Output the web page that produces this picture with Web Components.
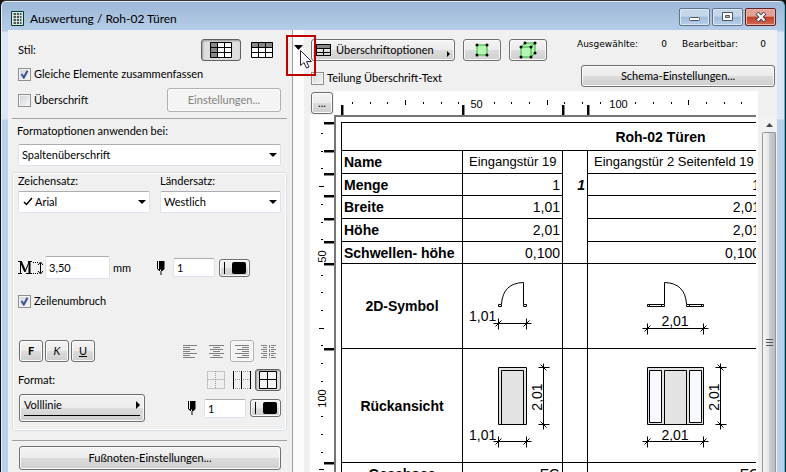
<!DOCTYPE html>
<html lang="de">
<head>
<meta charset="utf-8">
<title>Auswertung / Roh-02 Türen</title>
<style>
html, body { height: 100%; margin: 0; }
body { background: #111; overflow: hidden; font: 11px/14px Lato, "DejaVu Sans Condensed", sans-serif; color: #000; }
</style>
</head>
<body>
<report-window></report-window>
<script>
const base = `
*, *::before, *::after { box-sizing: border-box; }
svg { display: block; flex: none; }
button, input, select { font: inherit; color: inherit; margin: 0; }
`;
function define(name, css, html, setup) {
  const t = document.createElement('template');
  t.innerHTML = `<style>${base}${css}</style>${html}`;
  customElements.define(name, class extends HTMLElement {
    constructor() { super(); this.attachShadow({ mode: 'open' }).append(t.content.cloneNode(true)); }
    connectedCallback() { if (setup) setup(this, this.shadowRoot); }
  });
}

/* push button */
define('ui-button', `
:host { display: block; height: 22px; }
button { width: 100%; height: 100%; display: flex; align-items: center; justify-content: center; gap: 5px; padding: 0 4px;
  border: 1px solid #707070; border-radius: 3px; box-shadow: inset 0 0 0 1px #fafafa;
  background: linear-gradient(#f3f3f3 0%, #ebebeb 50%, #dcdcdc 51%, #cecece 100%); }
:host([kind=pressed]) button { background: #dedede; border-color: #606060; box-shadow: inset 1px 1px 2px #999; }
:host([kind=flat]) button { background: none; border-color: transparent; box-shadow: none; }
:host([kind=framed]) button { background: #f4f4f4; border-color: #adb2b5; }
:host([kind=disabled]) button { background: #f4f4f4; border-color: #adb2b5; color: #838383; }
:host([align=left]) button { justify-content: flex-start; }
:host([kind=dark]) button { padding: 0 2px; }
`, `<button type="button"><slot></slot></button>`, (h, r) => {
  const b = r.querySelector('button');
  if (h.getAttribute('kind') === 'disabled') b.disabled = true;
  if (h.getAttribute('name')) b.setAttribute('aria-label', h.getAttribute('name'));
});

/* check box with its label */
define('ui-check', `
:host { display: block; }
label { display: flex; align-items: center; gap: 3px; height: 14px; white-space: nowrap; }
input { appearance: none; width: 13px; height: 13px; border: 1px solid #8e8f8f; background: linear-gradient(135deg, #cfd3d8, #f6f6f6); box-shadow: inset 0 0 0 1px #f4f4f4; }
input:checked { background: url("data:image/svg+xml,%3Csvg xmlns='http://www.w3.org/2000/svg' viewBox='0 0 11 11'%3E%3Cpath d='M2.5 5L4.8 8.5L8.5 1.8' fill='none' stroke='%233c5397' stroke-width='2'/%3E%3C/svg%3E") center/11px no-repeat, linear-gradient(135deg, #cfd3d8, #f6f6f6); }
`, `<label><input type="checkbox"><slot></slot></label>`, (h, r) => { r.querySelector('input').checked = h.hasAttribute('checked'); });

/* drop-down with optional caption and check mark */
define('ui-select', `
:host { display: block; }
label { display: block; height: 14px; margin-bottom: 3px; }
:host([plain]) label { margin: 0 0 6px -1px; }
.box { position: relative; }
select { appearance: none; width: 100%; height: 22px; border: 1px solid #dce3ec; border-top-color: #abadb3; border-radius: 2px; background: #fff; padding: 0 20px 0 3px; outline: 0; }
:host([mark]) select { padding-left: 16px; }
.arrow { position: absolute; right: 4px; top: 9px; }
.mark { position: absolute; left: 5px; top: 6px; display: none; }
:host([mark]) .mark { display: block; }
`, `<label for="s"></label><div class="box"><select id="s"></select>
<svg class="mark" width="10" height="9"><path d="M1 5L3.500 7.500L9 1" fill="none" stroke="#000" stroke-width="1.5"/></svg>
<svg class="arrow" width="8" height="4"><path d="M0 0H8L4 4Z"/></svg></div>`, (h, r) => {
  r.querySelector('label').textContent = h.getAttribute('label');
  r.querySelector('select').append(new Option(h.getAttribute('value')));
});

/* icon, number box, unit */
define('ui-field', `
:host { display: block; }
label { display: flex; align-items: center; gap: 3px; }
input { width: var(--w, 42px); height: var(--h, 19px); border: 1px solid #dce3ec; border-top-color: #abadb3; border-radius: 2px; background: #fff; padding: 0 3px; outline: 0; }
`, `<label><slot name="icon"></slot><input type="text"><slot></slot></label>`, (h, r) => {
  const i = r.querySelector('input'); i.value = h.getAttribute('value'); i.setAttribute('aria-label', h.getAttribute('name'));
});

/* pen number with colour swatch */
define('pen-picker', `
:host { display: flex; align-items: center; gap: 4px; }
ui-field svg { margin-right: 5px; }
ui-button { width: 31px; height: 18px; }
`, `<ui-field name="Stift" value="1"><svg slot="icon" width="8" height="14"><path d="M0 0H1V8H0ZM2 0H7.500V8L5.500 10H4.500V14H3.500V10H2.500L.5 8.500V8H2Z"/><path d="M3.500 8.500V10" stroke="#fff"/></svg></ui-field>
<ui-button kind="dark" name="Stiftfarbe"><svg width="24" height="14"><path d="M1.500 1V13" stroke="#000"/><rect x="9" y="1" width="14" height="12" rx="2"/></svg></ui-button>`);

/* left settings panel */
const lines = (rows) => rows.map((w, i) => `M${w[0]} ${i * 2 + .5}H${w[1]}`).join('');
define('settings-panel', `
:host { display: block; background: #f0f0f0; padding: 9px 5px 0 4px; border-right: 1px solid #a0a0a0; }
.in { padding: 0 6px; }
.row { display: flex; align-items: center; justify-content: space-between; }
.set { display: flex; align-items: center; }
hr { border: 0; border-top: 1px solid #a0a0a0; margin: 0; }
fieldset { margin: 6px 0 9px; padding: 1px 5px 8px; border: 1px solid #d5dfe5; border-radius: 3px; box-shadow: inset 0 0 0 1px #fff; min-width: 0; }
.line { width: 100%; border-bottom: 1px solid #000; padding-bottom: 3px; margin-bottom: 2px; }
`, `
<div class="in">
  <div class="row"><span>Stil:</span>
    <div class="set" style="gap:2px">
      <ui-button kind="pressed" name="Spalten" style="width:40px"><svg width="22" height="16"><path fill="#fff" d="M0 0H22V16H0Z"/><path fill="#888" d="M0 0H8V16H0Z"/><path d="M.5 .5H21.500V15.500H.5ZM.5 5.500H21.500M.5 10.500H21.500M7.500 0V16M14.500 0V16" fill="none" stroke="#000"/></svg></ui-button>
      <ui-button kind="flat" name="Zeilen" style="width:38px"><svg width="22" height="16"><path fill="#fff" d="M0 0H22V16H0Z"/><path fill="#888" d="M0 0H22V6H0Z"/><path d="M.5 .5H21.500V15.500H.5ZM.5 5.500H21.500M.5 10.500H21.500M7.500 0V16M14.500 0V16" fill="none" stroke="#000"/></svg></ui-button>
    </div>
  </div>
  <ui-check checked style="margin-top:6px">Gleiche Elemente zusammenfassen</ui-check>
  <div class="row" style="margin-top:7px"><ui-check>Überschrift</ui-check><ui-button kind="disabled" style="width:114px;height:24px">Einstellungen...</ui-button></div>
</div>
<hr style="margin:6px 0 5px">
<div class="in"><ui-select plain label="Formatoptionen anwenden bei:" value="Spaltenüberschrift"></ui-select></div>
<fieldset>
  <div class="row"><ui-select mark label="Zeichensatz:" value="Arial" style="width:132px"></ui-select><ui-select label="Ländersatz:" value="Westlich" style="width:121px"></ui-select></div>
  <div class="row" style="margin-top:43px">
    <ui-field name="Schrifthöhe" value="3,50" style="--w:65px;--h:23px"><svg slot="icon" width="25" height="14" style="margin-right:-1px"><path d="M0 .5H4M10 .5H14M0 12.500H4M8 12.500H14" stroke="#000"/><path d="M2.500 1V12M3 1L7 11L11 1" fill="none" stroke="#000"/><path d="M3 1L7 10" stroke="#000" stroke-width="2"/><path d="M11.500 1V12" stroke="#000" stroke-width="2"/><path d="M15 1.500H20M15 12.500H20" stroke="#000" stroke-dasharray="1 1"/><path d="M22.500 2V12M20 4L22.500 1L25 4M20 10L22.500 13L25 10" fill="none" stroke="#000"/></svg>mm</ui-field>
    <pen-picker style="margin-right:31px"></pen-picker>
  </div>
  <ui-check checked style="margin-top:15px">Zeilenumbruch</ui-check>
  <div class="row" style="margin-top:32px">
    <div class="set" style="gap:2px;margin-left:1px">
      <ui-button style="width:24px"><b>F</b></ui-button><ui-button style="width:24px"><i>K</i></ui-button><ui-button style="width:24px"><u>U</u></ui-button>
    </div>
    <div class="set" style="gap:2px">
      <ui-button kind="flat" name="Linksbündig" style="width:24px"><svg width="14" height="13"><path stroke="#808080" d="${lines([[0,14],[0,7],[0,12],[0,7],[0,14],[0,7],[0,12]])}"/></svg></ui-button>
      <ui-button kind="flat" name="Zentriert" style="width:24px"><svg width="15" height="13"><path stroke="#808080" d="${lines([[0,15],[4,11],[1,14],[4,11],[0,15],[4,11],[1,14]])}"/></svg></ui-button>
      <ui-button kind="framed" name="Rechtsbündig" style="width:24px"><svg width="14" height="13"><path stroke="#808080" d="${lines([[0,14],[7,14],[2,14],[7,14],[0,14],[7,14],[2,14]])}"/></svg></ui-button>
      <ui-button kind="flat" name="Blocksatz" style="width:25px"><svg width="15" height="13"><path stroke="#808080" d="${lines([[0,6],[2,6],[0,6],[2,6],[0,6],[2,6],[0,6]])}${lines([[10,15],[10,13],[10,15],[10,13],[10,15],[10,13],[10,15]])}"/><path stroke="#808080" stroke-dasharray="3 1" d="M8.500 0V13"/></svg></ui-button>
    </div>
  </div>
  <div class="row" style="margin-top:7px"><span>Format:</span>
    <div class="set">
      <ui-button kind="flat" name="Ohne Linien" style="width:26px"><svg width="18" height="18"><path fill="none" stroke="#999" stroke-dasharray="1 1" d="M.5 .5H17.500V17.500H.5ZM.5 8.500H18M8.500 0V18"/></svg></ui-button>
      <ui-button kind="flat" name="Senkrechte Linien" style="width:26px"><svg width="18" height="18"><path stroke="#999" stroke-dasharray="1 1" d="M0 .5H18M0 8.500H18M0 17.500H18"/><path stroke="#000" d="M.5 0V18M8.500 0V18M17.500 0V18"/></svg></ui-button>
      <ui-button kind="pressed" name="Alle Linien" style="width:26px"><svg width="18" height="18"><path fill="#f4f4f4" stroke="#000" d="M.5 .5H17.500V17.500H.5ZM.5 8.500H18M8.500 0V18"/></svg></ui-button>
    </div>
  </div>
  <div class="row" style="margin-top:3px">
    <ui-button align="left" style="width:126px;height:28px;margin-left:1px"><div class="line row">Volllinie<svg width="4" height="8"><path d="M0 0L4 4L0 8Z"/></svg></div></ui-button>
    <pen-picker></pen-picker>
  </div>
</fieldset>
<hr>
<div class="in" style="padding-top:5px"><ui-button style="height:24px;margin-left:1px">Fußnoten-Einstellungen...</ui-button></div>
`);

/* rulers: scale marks every tenth, heavy marks at the table's lines */
function ruler(vertical) {
  const P = (a, b) => vertical ? `${b} ${a}` : `${a} ${b}`;
  let s = '';
  const marks = vertical ? [122,150,173,195,218,241,263,348,462] : [341,462,562,587];
  const first = vertical ? 133 : 352;
  for (let n = 0; n < 24; n++) {
    const p = Math.round(first + n * 17.7) + .5, k = n + 1, label = k === 8 || k === 16;
    if (label) {
      const t = k === 8 ? '50' : '100';
      s += vertical ? `<text text-anchor="middle" transform="translate(326 ${p - 1}) rotate(-90)">${t}</text>` : `<text text-anchor="middle" x="${p}" y="108">${t}</text>`;
    } else {
      const tall = k % 8 === 4, c = vertical ? 321 : 102;
      s += `<path stroke="#000" d="M${P(p, tall ? c - 2 : c)}L${P(p, tall ? c + 3 : c + 2)}"/>`;
    }
  }
  for (const m of marks) s += vertical
    ? `<path d="M324 ${m}h10v2h-10z"/><path fill="#888" d="M324 ${m + 2}h10v1h-10z"/>`
    : `<path d="M${m} 105h2v10h-2z"/><path fill="#888" d="M${m + 2} 105h1v10h-1z"/>`;
  return vertical ? `<svg width="24" height="1000" viewBox="310 115 24 1000">${s}</svg>` : `<svg width="424" height="24" viewBox="334 91 424 24">${s}</svg>`;
}
const rulerCss = `:host { display: block; overflow: hidden; background: #fff; min-width: 0; min-height: 0; } svg { font: 11px "Liberation Sans", Arial, sans-serif; }`;
define('ruler-top', rulerCss, ruler(false));
define('ruler-side', rulerCss, ruler(true));

/* dimension lines */
const hdim = (a, b, y) => `<path d="M${a - 5} ${y}H${b + 5}M${a} ${y - 5}V${y + 6}M${b} ${y - 5}V${y + 6}M${a - 3} ${y + 3}L${a + 3} ${y - 3}M${b - 3} ${y + 3}L${b + 3} ${y - 3}"/>`;
const vdim = (x, a, b) => `<path d="M${x} ${a - 4}V${b + 5}M${x - 5} ${a}H${x + 6}M${x - 5} ${b}H${x + 6}M${x - 3} ${a - 3}L${x + 3} ${a + 3}M${x - 3} ${b - 3}L${x + 3} ${b + 3}"/>`;
define('schedule-table', `
:host { display: block; overflow: hidden; min-width: 0; min-height: 0; background: #fff; padding: 5px 0 0 5px; border: solid #767676; border-width: 2px 0 0 2px; font: 14px/20px "Liberation Sans", Arial, sans-serif; }
table { border-collapse: collapse; table-layout: fixed; width: 639px; }
th, td { border: 1px solid #000; padding: 0 2px; white-space: nowrap; height: 1px; }
th { text-align: left; }
td { text-align: right; }
td:nth-last-child(2):not(.d) { padding-right: 5px; }
.c { text-align: center; }
td.d { padding: 0; }
td.w { text-align: left; padding-left: 6px; font-size: 13px; }
svg { fill: none; stroke: #000; }
text { fill: #000; stroke: none; }
`, `
<table>
<colgroup><col style="width:121px"><col style="width:100px"><col style="width:25px"><col style="width:178px"><col></colgroup>
<tr style="height:28px"><th class="c" colspan="5">Roh-02 Türen</th></tr>
<tr style="height:23px"><th>Name</th><td class="w">Eingangstür 19</td><td rowspan="5" style="vertical-align:top;padding-top:24px"><b><i>1</i></b></td><td class="w">Eingangstür 2 Seitenfeld 19</td><td></td></tr>
<tr style="height:22px"><th>Menge</th><td>1</td><td>1</td><td></td></tr>
<tr style="height:23px"><th>Breite</th><td>1,01</td><td>2,01</td><td></td></tr>
<tr style="height:23px"><th>Höhe</th><td>2,01</td><td>2,01</td><td></td></tr>
<tr style="height:22px"><th>Schwellen- höhe</th><td>0,100</td><td>0,100</td><td></td></tr>
<tr style="height:85px"><th class="c">2D-Symbol</th>
<td class="d"><svg width="99" height="84" viewBox="463 264 99 84"><path d="M498.500 304.500h3v2h-3zM523.500 304.500h3v2h-3zM523.500 304V282.500Q503 283 501.500 304"/>${hdim(498.5, 526.5, 323.5)}<text x="469" y="321">1,01</text></svg></td><td></td>
<td class="d"><svg width="177" height="84" viewBox="588 264 177 84"><path d="M647.500 304.500h17v2h-17zM686.500 304.500h17v2h-17zM649.500 305v1M661.500 305v1M689.500 305v1M701.500 305v1M664.500 304V282.500Q685 283 686.500 304"/>${hdim(647.5, 703.5, 328.5)}<text x="675" y="326" text-anchor="middle">2,01</text></svg></td><td></td></tr>
<tr style="height:114px"><th class="c">Rückansicht</th>
<td class="d"><svg width="99" height="113" viewBox="463 349 99 113"><path fill="#e3e3e3" d="M498.500 367.500h28v57h-28z"/><path d="M501.500 424V370.500h22V424"/>${vdim(543.5, 367.5, 424.5)}${hdim(498.5, 526.5, 441.5)}<text x="469" y="440">1,01</text><text text-anchor="middle" transform="translate(542 397) rotate(-90)">2,01</text></svg></td><td></td>
<td class="d"><svg width="177" height="113" viewBox="588 349 177 113"><path fill="#e3e3e3" d="M647.500 367.500h56v57h-56z"/><path d="M664.500 424V370.500h22V424"/><path fill="#f8f8ff" d="M649.500 370.500h12v52h-12zM689.500 370.500h12v52h-12z"/>${vdim(720.5, 367.5, 424.5)}${hdim(647.5, 703.5, 441.5)}<text x="675" y="440" text-anchor="middle">2,01</text><text text-anchor="middle" transform="translate(719 397) rotate(-90)">2,01</text></svg></td><td></td></tr>
<tr style="height:22px"><th class="c">Geschoss</th><td>EG</td><td></td><td>EG</td><td></td></tr>
</table>`);

define('scroll-bar', `
:host { display: flex; flex-direction: column; background: #f0f0f0; padding: 2px 1px 0 4px; min-height: 0; }
.up { height: 15px; display: flex; align-items: center; justify-content: center; background: #f2f2f2; }
.thumb { flex: 1; border: 1px solid #979797; border-radius: 2px 2px 0 0; border-bottom: 0; background: linear-gradient(90deg, #f5f5f5, #e6e6e8 45%, #cfcfd2 55%, #b9babd); display: flex; justify-content: center; padding-top: 206px; }
`, `<div class="up"><svg width="7" height="4"><path d="M0 4L3.500 0L7 4Z" fill="#444"/></svg></div>
<div class="thumb"><svg width="7" height="8"><path d="M0 .5H7M0 3.500H7M0 6.500H7" stroke="#555"/></svg></div>`);

define('preview-panel', `
:host { display: flex; flex-direction: column; background: #f0f0f0; min-width: 0; min-height: 0; }
header { display: flex; justify-content: space-between; padding: 9px 2px 0 7px; margin-bottom: 4px; }
.tools { display: flex; gap: 8px; }
.counts { display: flex; justify-content: space-between; width: 90px; }
.info { display: flex; gap: 15px; padding-right: 9px; margin-bottom: 15px; justify-content: flex-end; font: 9px/11px "DejaVu Sans", sans-serif; }
.grid { flex: 1; display: grid; grid-template: 24px 1fr / 24px 1fr 2px 19px; min-height: 0; margin-left: 6px; }
.side { background: #fff; }
`, `
<header>
  <div>
    <div class="tools">
      <ui-button align="left" style="width:144px"><svg width="15" height="12"><path fill="#888" d="M0 0H15V4H0Z"/><path d="M0 .5H15M0 4.500H15M.5 0V12M7.500 4V12M14.500 0V12M0 8.500H15M0 11.500H15" stroke="#000" fill="none"/></svg><span style="flex:1;text-align:left">Überschriftoptionen</span><svg width="3" height="6" style="margin-top:8px"><path d="M0 0L3 3L0 6Z"/></svg></ui-button>
      <ui-button name="Auswahl 2D" style="width:38px"><svg width="14" height="14"><path fill="#b4f5b4" stroke="#28b428" d="M2 2H12V12H2Z"/><circle cx="2" cy="2" r="1.500"/><circle cx="12" cy="2" r="1.500"/><circle cx="2" cy="12" r="1.500"/><circle cx="12" cy="12" r="1.500"/></svg></ui-button>
      <ui-button name="Auswahl 3D" style="width:38px"><svg width="18" height="18"><path fill="#b4f5b4" stroke="#28b428" d="M2 6L6 2H16V12L12 16H2ZM2 6H12V16M12 6L16 2"/><g><circle cx="6" cy="2" r="1.500"/><circle cx="16" cy="2" r="1.500"/><circle cx="2" cy="6" r="1.500"/><circle cx="12" cy="6" r="1.500"/><circle cx="2" cy="16" r="1.500"/><circle cx="12" cy="16" r="1.500"/><circle cx="16" cy="12" r="1.500"/></g></svg></ui-button>
    </div>
    <ui-check style="margin-top:10px">Teilung Überschrift-Text</ui-check>
  </div>
  <div>
    <div class="info"><div class="counts"><span>Ausgewählte:</span><span>0</span></div><div class="counts" style="width:84px"><span>Bearbeitbar:</span><span>0</span></div></div>
    <ui-button style="width:194px;margin-left:auto">Schema-Einstellungen...</ui-button>
  </div>
</header>
<div class="grid">
  <ui-button style="width:22px;margin:1px 0 0 1px">...</ui-button><ruler-top style="grid-column:span 2"></ruler-top><span></span>
  <ruler-side></ruler-side><schedule-table></schedule-table><span class="side"></span><scroll-bar></scroll-bar>
</div>`);

define('report-window', `
:host { display: flex; flex-direction: column; height: 100vh; position: relative; margin: 0; border-top: 1px solid #333; border-left: 1px solid #111; border-right: 1px solid #111; box-shadow: inset -1px 0 #35c5ec, inset 1px 0 #e4eef8, inset 0 1px #dfeaf5; border-radius: 6px 6px 0 0;
  padding: 1px 8px 0 7px; background: linear-gradient(#9bb7d6 0, #b5cde8 30px, #dbe7f5 31px, #dbe7f5 118px, #b9d1ea 119px); }
.title { display: flex; align-items: center; height: 28px; flex: none; padding: 5px 0 0 3px; font-size: 12px; gap: 6px; }
.title span { flex: 1; }
.win { display: flex; gap: 2px; margin: 2px 1px 6px; }
.win button { width: 31px; height: 18px; padding: 0; display: flex; align-items: center; justify-content: center; border: 1px solid #5f7489; border-radius: 2px; box-shadow: inset 0 0 0 1px #dbe8f5; background: linear-gradient(#c5d8eb 45%, #a1bcd9 50%, #b8d0e8); }
.win .x { border-color: #5b2326; box-shadow: inset 0 0 0 1px #edb3a8; background: linear-gradient(#e3a296 45%, #c3402b 50%, #d06a50); }
main { flex: 1; display: grid; grid-template-columns: 285px 11px 1fr; min-height: 0; overflow: hidden; background: #f0f0f0; }
.strip { background: #fcfcfc; }
.mark { position: absolute; left: 285px; top: 34px; width: 30px; height: 41px; border: 2px solid #c00000; }
.mark svg { margin: 8px 0 0 6px; overflow: visible; }
`, `
<div class="title"><svg width="13" height="15"><path fill="#c8f5e4" stroke="#133" d="M.5 .5H12.500V14.500H.5Z"/><path fill="#555" d="M2.500 2H10.500V13H2.500Z"/><path stroke="#e4f4ee" d="M2 4.500H11M2 7.500H11M2 10.500H11M5.500 2V13M8.500 2V13" stroke-width=".8"/></svg><span>Auswertung / Roh-02 Türen</span>
<div class="win"><button aria-label="Minimieren"><svg width="12" height="10"><rect x=".5" y="5.500" width="10" height="3" rx="1" fill="#fff" stroke="#4b5563"/></svg></button><button aria-label="Maximieren"><svg width="11" height="9"><path d="M.5 .5H10.500V8.500H.5Z" fill="#fff" stroke="#4b5563"/><path d="M3.500 3.500H7.500V5.500H3.500Z" fill="#a9c2dc" stroke="#4b5563"/></svg></button><button class="x" aria-label="Schließen"><svg width="12" height="10"><path d="M2 1L10 9M10 1L2 9" stroke="#504a52" stroke-width="4"/><path d="M2.500 1.500L9.500 8.500M9.500 1.500L2.500 8.500" stroke="#fff" stroke-width="2"/></svg></button></div></div>
<main><settings-panel></settings-panel><div class="strip"></div><preview-panel></preview-panel></main>
<div class="mark"><svg width="20" height="26"><path d="M0 0H9L4.500 5Z"/><path d="M6.500 5.500V20.500L10 17.500L12.500 23L15 22L12.500 16.500H17.500Z" fill="#fff" stroke="#223"/></svg></div>
`);
</script>
</body>
</html>
